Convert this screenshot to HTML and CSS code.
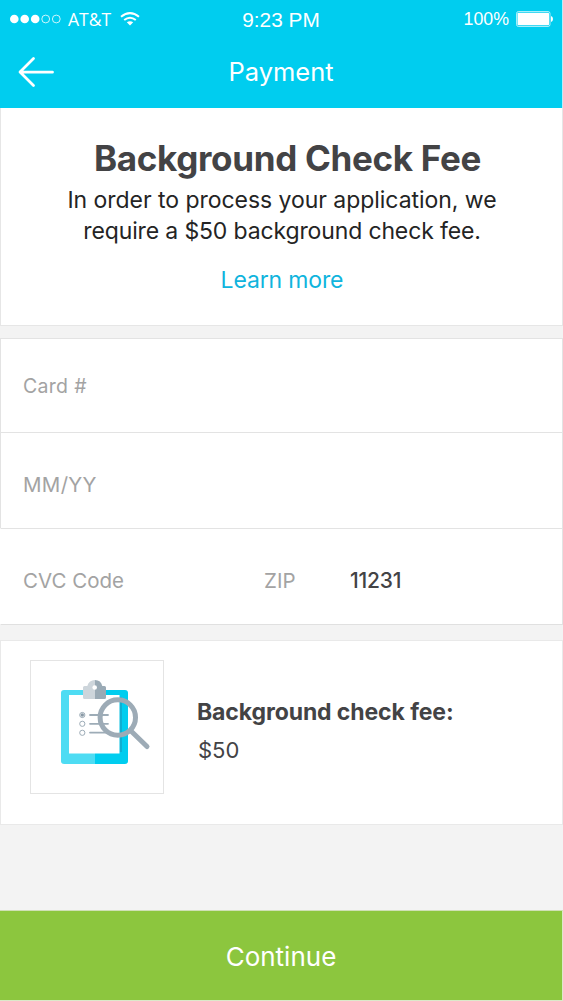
FILE: index.html
```html
<!DOCTYPE html>
<html lang="en">
<head>
<meta charset="utf-8">
<title>Payment</title>
<link rel="stylesheet" href="styles.css">
</head>
<body>
<main class="screen">
  <header class="header">
    <div class="status">
      <div class="carrier">
        <svg class="signal" width="52" height="10" viewBox="0 0 52 10"><g fill="#fff"><circle cx="4.3" cy="5" r="4.3"/><circle cx="14.7" cy="5" r="4.3"/><circle cx="25.2" cy="5" r="4.3"/></g><g fill="none" stroke="#fff" stroke-width=".8"><circle cx="35.7" cy="5" r="3.9"/><circle cx="46.3" cy="5" r="3.9"/></g></svg>
        <span class="network">AT&amp;T</span>
        <svg class="wifi" width="20" height="14" viewBox="0 0 20 14"><g fill="none" stroke="#fff" stroke-width="2"><path d="M1 4.8Q10-2.5 19 4.8"/><path d="M4.2 8Q10 3.4 15.800 8"/></g><path d="M6.800 10.300Q10 8 13.200 10.300L10 13.500Z" fill="#fff"/></svg>
      </div>
      <span class="time">9:23 PM</span>
      <div class="power">
        <span class="percent">100%</span>
        <svg class="battery" width="37" height="16" viewBox="0 0 37 16"><rect x=".5" y=".5" width="33.500" height="15" rx="2" fill="none" stroke="#fff" stroke-opacity=".65"/><rect x="1.500" y="1.800" width="31.500" height="12.400" rx=".8" fill="#fff"/><path d="M35 5Q37 5.500 37 8T35 11Z" fill="#fff"/></svg>
      </div>
    </div>
    <nav class="nav">
      <svg class="back" width="38" height="32" viewBox="0 0 38 32"><path d="M16.500 2.500 3 16 16.500 29.500M3.500 16.200H35.500" fill="none" stroke="#fff" stroke-width="2.800" stroke-linecap="round" stroke-linejoin="round"/></svg>
      <h1 class="title">Payment</h1>
    </nav>
  </header>

  <section class="intro">
    <h2 class="heading">Background Check Fee</h2>
    <p class="copy"><span class="copy-first">In order to process your application, we</span><br><span class="copy-second">require a $50 background check fee.</span></p>
    <a class="learn">Learn more</a>
  </section>

  <section class="form">
    <div class="row row-card"><span class="label label-card">Card #</span></div>
    <div class="row row-date"><span class="label label-date">MM/YY</span></div>
    <div class="row row-code"><span class="label label-cvc">CVC Code</span><span class="label label-zip">ZIP</span><span class="value">11231</span></div>
  </section>

  <section class="summary">
    <div class="thumb">
      <svg width="132" height="132" viewBox="31 661 132 132">
        <path d="M95 690H64Q61 690 61 693V761Q61 764 64 764H95Z" fill="#4edcf3"/>
        <path d="M95 690H125Q128 690 128 693V761Q128 764 125 764H95Z" fill="#00cdef"/>
        <path d="M119.500 697H122V752H119.500Z" fill="#0faed1"/>
        <path d="M69 695H119.500V753.500H69Z" fill="#fff"/>
        <path d="M95 680A7.700 7.700 0 0 0 87.300 686H84.500Q83 686 83 687.500V697.500Q83 699 84.500 699H95Z" fill="#cdd5db"/>
        <path d="M95 680A7.700 7.700 0 0 1 102.300 686H104.500Q106 686 106 687.500V697.500Q106 699 104.500 699H95Z" fill="#9aaab5"/>
        <circle cx="94.700" cy="687.500" r="2.300" fill="#fff"/>
        <g fill="none" stroke="#9dacb7" stroke-width="1"><circle cx="82.300" cy="715" r="2.600"/><circle cx="82.300" cy="723.800" r="2.600"/><circle cx="82.300" cy="732.800" r="2.600"/></g>
        <circle cx="82.300" cy="715" r="1.700" fill="#8999a5"/>
        <path d="M90 715H108M90 723.800H108M90 732.600H108" stroke="#9dacb7" stroke-width="1.800" stroke-linecap="round"/>
        <circle cx="117.800" cy="717.500" r="17.700" fill="none" stroke="#9dabb6" stroke-width="5"/>
        <path d="M131 731 147 746.500" stroke="#9dabb6" stroke-width="5" stroke-linecap="round"/>
      </svg>
    </div>
    <div class="details">
      <span class="fee-label">Background check fee:</span>
      <span class="fee">$50</span>
    </div>
  </section>

  <footer class="footer"><button class="continue">Continue</button></footer>
</main>
</body>
</html>
```
FILE: styles.css
```css
* { box-sizing: border-box; }
body { margin: 0; background: #f3f3f3; font-family: Inter, "Liberation Sans", sans-serif; }
h1, h2, p { margin: 0; }
svg { display: block; flex: none; }
span, a { white-space: nowrap; }
.screen { width: 563px; height: 1001px; display: flex; flex-direction: column; overflow: hidden; }

.header { height: 108px; flex: none; background: #00cdef; color: #fff; border-right: 1px solid #b8edf8; }
.status { height: 38px; display: grid; grid-template-columns: 1fr auto 1fr; align-items: center; padding: 0 9px 0 10px; }
.carrier { display: flex; align-items: center; margin-top: -2px; }
.network { font: 17.5px/36px "Open Sans", sans-serif; margin-left: 6px; }
.wifi { margin-left: 9px; }
.time { font: 20.8px/38px "Liberation Sans", sans-serif; padding-top: 1px; margin-left: -1px; }
.power { display: flex; justify-content: flex-end; align-items: center; gap: 7px; margin-top: -1px; }
.percent { font: 17.8px/36px "Liberation Sans", sans-serif; }
.nav { height: 70px; display: grid; grid-template-columns: 56px 1fr 56px; align-items: center; padding-bottom: 3px; }
.back { margin-left: 17px; }
.title { font-size: 25.5px; line-height: 67px; font-weight: 400; text-align: center; }

.intro { height: 218px; flex: none; background: #fff; border: 1px solid #e6e6e6; border-top: 0; padding-top: 29px; text-align: center; }
.heading { color: #434345; font-size: 35px; line-height: 42px; font-weight: 700; letter-spacing: -.31px; padding-left: 12px; }
.copy { color: #242424; font-size: 23px; line-height: 31px; padding-top: 6px; padding-left: 1px; }
.copy-first { letter-spacing: -.04px; }
.copy-second { letter-spacing: -.14px; }
.learn { display: block; color: #10b4dd; font-size: 23px; line-height: 30px; letter-spacing: -.15px; margin-top: 18px; padding-left: 1px; }

.form { flex: none; margin-top: 12px; }
.row { display: flex; align-items: center; background: #fff; border: 1px solid #e3e3e3; border-bottom: 0; padding-left: 22px; color: #a3a3a3; }
.row-card { height: 94px; font-size: 19.5px; letter-spacing: .3px; }
.row-date { height: 96px; font-size: 20.5px; letter-spacing: .3px; padding-top: 8px; }
.row-code { height: 97px; font-size: 20.5px; padding-top: 8px; border-bottom: 1px solid #e0e0e0; border-left-color: #fff; }
.label-cvc { width: 241px; }
.label-zip { width: 86px; }
.value { color: #434345; font-size: 21px; font-weight: 500; letter-spacing: -.2px; }

.summary { height: 185px; flex: none; margin-top: 15px; background: #fff; border: 1px solid #e9e9e9; display: flex; padding: 19px 0 0 29px; }
.thumb { width: 134px; height: 134px; border: 1px solid #e4e4e4; }
.details { display: flex; flex-direction: column; padding: 36px 0 0 33px; color: #434345; }
.fee-label { font-size: 23px; line-height: 32px; font-weight: 700; letter-spacing: -.1px; }
.fee { font-size: 22px; line-height: 30px; margin-top: 7px; padding-left: 1px; }

.footer { height: 91px; flex: none; margin-top: auto; border-top: 1px solid #cfe0b5; border-right: 1px solid #dce9c9; border-bottom: 1px solid #dce9c9; }
.continue { width: 100%; height: 100%; border: 0; padding: 3px 0 0; background: #8cc63e; color: #fff; font-family: inherit; font-size: 26px; line-height: 32px; }
```
